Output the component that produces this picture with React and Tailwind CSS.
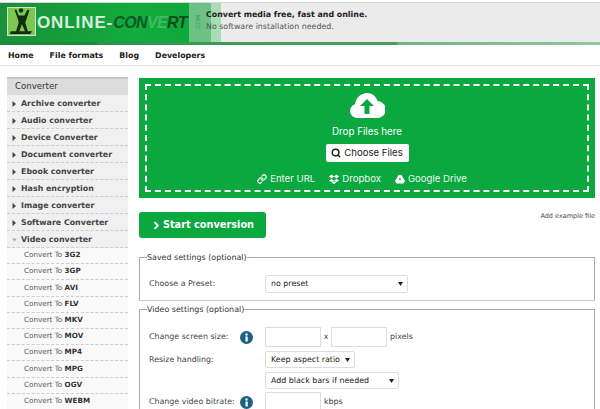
import React from 'react';
import { Search, Link, ChevronRight } from 'lucide-react';

const converters = ['Archive converter', 'Audio converter', 'Device Converter', 'Document converter', 'Ebook converter', 'Hash encryption', 'Image converter', 'Software Converter'];
const formats = ['3G2', '3GP', 'AVI', 'FLV', 'MKV', 'MOV', 'MP4', 'MPG', 'OGV', 'WEBM'];

const Caret = ({ down }) => (
  <svg width="5" height="6" viewBox="0 0 5 6" className="shrink-0">
    {down ? <path d="M0 1.500h5L2.500 4.500z" fill="#aaa" /> : <path d="M.5 0l3.500 3-3.500 3z" fill="#444" />}
  </svg>
);

const InfoIcon = () => (
  <svg width="13" height="13" viewBox="0 0 13 13" className="shrink-0">
    <circle cx="6.5" cy="6.5" r="6.500" fill="#1d5f85" />
    <rect x="5.500" y="5.500" width="2.200" height="5" fill="#fff" />
    <circle cx="6.500" cy="3.500" r="1.200" fill="#fff" />
  </svg>
);

const FakeSelect = ({ children, className }) => (
  <div className={`flex items-center justify-between border border-[#ddd] bg-white pl-[5px] pr-[4px] text-[7.9px] text-[#222] rounded-[2px] ${className}`}>
    <span className="whitespace-nowrap">{children}</span>
    <svg width="5" height="4" viewBox="0 0 5 4" className="shrink-0"><path d="M0 0h5L2.500 4z" fill="#222" /></svg>
  </div>
);

const Logo = () => (
  <div className="relative h-full w-[221px] shrink-0 bg-[linear-gradient(90deg,#1b8f3b_0%,#12ab3c_60%,#10a83a_85.5%,#6ec184_85.6%,#6ec184_95.4%,#a8dcb3_95.5%)] overflow-hidden">
    <div className="absolute left-[7px] top-[4px] w-[29px] h-[29px] bg-[#7bc74f] border border-[#cfe3c6]">
      <svg viewBox="0 0 29 29" className="w-full h-full">
        <path d="M3 25h23l-2 3H2z" fill="#142b14" />
        <path d="M14 5a2.400 2.400 0 1 1 .01 0zM7 2l2 0 2.500 6 6 0L21 2l2 .5-3 9-1.500 4 3 10h-3l-3.500-8-3 8H8.500l3-10-1-4z" fill="#142b14" />
      </svg>
    </div>
    <div className="absolute left-[37px] top-[10px] flex items-center font-['Liberation_Sans',sans-serif] font-bold text-[17px] leading-[20px]">
      <span className="text-[#d5f0dc] tracking-[0.9px]">ONLINE-</span>
      <span className="italic text-[16px] tracking-[-0.6px] text-[#0d5a25]">CON</span>
      <span className="italic text-[16px] tracking-[-0.6px] text-[#3fbd60]">VE</span>
      <span className="italic text-[16px] tracking-[-0.6px] text-[#0d4a20]">RT</span>
    </div>
    <span className="absolute left-[189px] top-[15px] -rotate-90 text-[6px] text-[#3d9a55]">.COM</span>
  </div>
);

export default function App() {
  return (
    <div className="w-[600px] h-[409px] overflow-hidden bg-white font-['DejaVu_Sans',Verdana,sans-serif]">
      <header className="pt-[2px]">
        <div className="flex h-[40px] bg-[#ebebeb] border-t border-[#d5d5d5]">
          <Logo />
          <div className="relative ml-[-15px] pt-[6px] text-[7.9px] leading-[12px]">
            <p className="font-bold text-[#222]">Convert media free, fast and online.</p>
            <p className="text-[#555]">No software installation needed.</p>
          </div>
        </div>
        <div className="h-[3px] bg-[linear-gradient(90deg,#1c8a3a_0%,#1c8a3a_16%,#2f9148_16.5%,#4a9e5c_50%,#4a9e5c_66%,#72b482_66.5%,#8dc99b_100%)]" />
      </header>

      <nav className="flex h-[21px] items-center gap-[16px] pl-[8px] pt-[1px] border-b border-[#e5e5e5] text-[7.9px] font-bold text-[#222]">
        <span>Home</span>
        <span>File formats</span>
        <span>Blog</span>
        <span>Developers</span>
      </nav>

      <div className="flex pt-[11px] pl-[7px] gap-[11px]">
        <aside className="w-[121px] shrink-0">
          <div className="h-[18px] flex items-center pl-[8px] pb-[2px] bg-[#dcdcdc] border-t-2 border-[#c4c4c4] text-[8.6px] text-[#333]">Converter</div>
          {converters.map((name) => (
            <div key={name} className="h-[17px] flex items-center gap-[4px] pl-[5px] pt-[2px] bg-[#f0f0f0] border-b border-dashed border-[#ccc] text-[7.9px] font-bold text-[#444] whitespace-nowrap">
              <Caret />
              <span>{name}</span>
            </div>
          ))}
          <div className="h-[17px] flex items-center gap-[4px] pl-[5px] pt-[2px] bg-[#f0f0f0] border-b border-dashed border-[#ccc] text-[7.9px] font-bold text-[#444] whitespace-nowrap">
            <Caret down />
            <span>Video converter</span>
          </div>
          {formats.map((f) => (
            <div key={f} className="h-[16.2px] flex items-center pl-[17px] bg-[#f9f9f9] border-b border-dashed border-[#ccc] text-[7.2px] text-[#555] whitespace-pre">
              Convert To <b className="text-[#333]">{f}</b>
            </div>
          ))}
        </aside>

        <main className="w-[456px] shrink-0 pt-[1px]">
          <div className="h-[120px] bg-[#0aa83f] p-[6px]">
            <div className="h-full border-2 border-dashed border-white flex flex-col items-center text-white text-[9.8px] font-['Inter',sans-serif]">
              <svg width="36" height="25" viewBox="0 0 36 25" className="mt-[7px] shrink-0">
                <path d="M8 25a7 7 0 0 1-2-13.700C6.500 5 12 0 18 0c5 0 9 3 10.500 8A8.500 8.500 0 0 1 28 25z" fill="#fff" />
                <path d="M18 6l7 7h-4.500v8h-5v-8H11z" fill="#0aa83f" />
              </svg>
              <span className="mt-[7px] leading-[14px]">Drop Files here</span>
              <div className="mt-[5px] h-[18px] w-[83px] justify-center flex items-center gap-[3px] bg-white rounded-[2px] text-[#222] text-[9.6px]">
                <Search size={10} strokeWidth={3.5} />
                <span>Choose Files</span>
              </div>
              <div className="mt-[10px] mr-[10px] flex items-center gap-[14px] leading-[14px] text-[#eafaf0] text-[9.6px]">
                <span className="flex items-center gap-[3px]"><Link size={10} strokeWidth={3} />Enter URL</span>
                <span className="flex items-center gap-[3px]">
                  <svg width="10" height="10" viewBox="0 0 10 10" fill="#fff"><path d="M2.500.5L5 2.500 2.500 4.500 0 2.500zM7.500.5L10 2.500 7.500 4.500 5 2.500zM2.500 4.800L5 6.800 2.500 8 0 6.800zM7.500 4.800L10 6.800 7.500 8 5 6.800zM5 7.300l2.500 1.200L5 10 2.500 8.500z" /></svg>
                  Dropbox
                </span>
                <span className="flex items-center gap-[3px]">
                  <svg width="10" height="10" viewBox="0 0 10 10" fill="#fff"><path d="M3.500 1h3l3.500 6-1.500 2.500h-7L0 7z" /><path d="M5 3.500L3.800 6h2.400z" fill="#0aa83f" /></svg>
                  Google Drive
                </span>
              </div>
            </div>
          </div>

          <div className="flex justify-between mt-[14px] h-[26px]">
            <div className="w-[127px] flex items-center justify-center gap-[1px] bg-[#0aa83f] rounded-[3px] text-white text-[9.75px] font-bold">
              <ChevronRight size={11} strokeWidth={4} />
              <span>Start conversion</span>
            </div>
            <span className="text-[6.5px] text-[#444] leading-[8px]">Add example file</span>
          </div>

          <fieldset className="mt-[14px] h-[49px] border border-[#aaa] border-b-[#ccc] pl-[9px] text-[7.9px] text-[#444]">
            <legend className="ml-[-2px] text-[7.95px] text-[#333] leading-[11px]">Saved settings (optional)</legend>
            <div className="flex items-center mt-[12px]">
              <span className="w-[116px]">Choose a Preset:</span>
              <FakeSelect className="w-[143px] h-[18px]">no preset</FakeSelect>
            </div>
          </fieldset>

          <fieldset className="mt-[3px] border border-[#aaa] pl-[9px] h-[120px] text-[7.9px] text-[#444]">
            <legend className="ml-[-2px] text-[7.95px] text-[#333] leading-[11px]">Video settings (optional)</legend>
            <div className="flex items-center mt-[12px] h-[20px]">
              <span className="w-[91px] whitespace-nowrap">Change screen size:</span>
              <span className="w-[25px]"><InfoIcon /></span>
              <div className="w-[56px] h-[20px] border border-[#ddd]" />
              <span className="w-[10px] text-center">x</span>
              <div className="w-[56px] h-[20px] border border-[#ddd]" />
              <span className="ml-[3px]">pixels</span>
            </div>
            <div className="flex items-center mt-[4px] h-[17px]">
              <span className="w-[116px] whitespace-nowrap">Resize handling:</span>
              <FakeSelect className="w-[90px] h-[17px]">Keep aspect ratio</FakeSelect>
            </div>
            <div className="flex items-center mt-[4px] h-[17px] pl-[116px]">
              <FakeSelect className="w-[134px] h-[17px]">Add black bars if needed</FakeSelect>
            </div>
            <div className="flex items-center mt-[3px] h-[20px]">
              <span className="w-[91px] whitespace-nowrap">Change video bitrate:</span>
              <span className="w-[25px]"><InfoIcon /></span>
              <div className="w-[56px] h-[20px] border border-[#ddd]" />
              <span className="ml-[3px]">kbps</span>
            </div>
          </fieldset>
        </main>
      </div>
    </div>
  );
}
